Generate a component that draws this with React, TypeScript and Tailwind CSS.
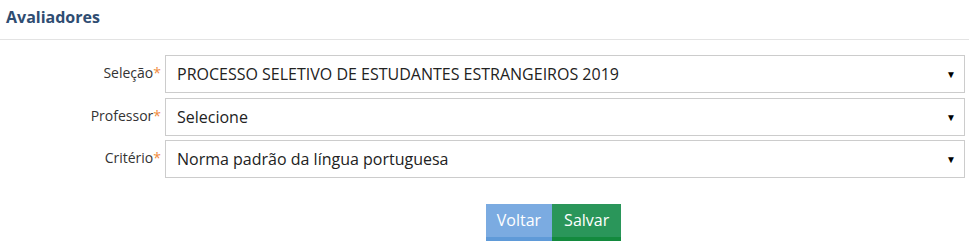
import React from "react";

const campos = [
    { label: "Seleção", value: "PROCESSO SELETIVO DE ESTUDANTES ESTRANGEIROS 2019" },
    { label: "Professor", value: "Selecione" },
    { label: "Critério", value: "Norma padrão da língua portuguesa" },
];

export default function App() {
    return (
        <div className="w-[971px] h-[247px] bg-white font-['Open_Sans',sans-serif] overflow-hidden">
            {/* cabeçalho */}
            <div className="pr-[2px]">
                <h2 className="pl-[6px] text-[16px] font-bold text-[#2f4d72] leading-[34px] h-[40px] border-b border-[#e3e3e3]">
                    Avaliadores
                </h2>
            </div>

            <div className="pt-[15px] flex flex-col gap-[4.5px]">
                {campos.map((c) => (
                    <Campo key={c.label} label={c.label} value={c.value} />
                ))}
            </div>

            <div className="flex justify-center pt-[26px] pl-[136px]">
                <button className="h-[37px] px-[11px] bg-[#7babe1] border-b-4 border-[#5f9ad8] text-white text-[16px] leading-[33px]">
                    Voltar
                </button>
                <button className="h-[37px] px-[12px] bg-[#2a965a] border-b-4 border-[#138a3e] text-white text-[16px] leading-[33px]">
                    Salvar
                </button>
            </div>
        </div>
    );
}

const Campo = ({ label, value }: { label: string; value: string }) => {
    return (
        <div className="flex items-center h-[38px]">
            <label className="w-[165px] pr-[4px] pb-[3px] text-right text-[14px] text-[#333]">
                {label}
                <span className="text-[#f08a3c]">*</span>
            </label>
            <div className="w-[800px] h-full border border-[#cccccc] flex items-center justify-between pl-[11px] pr-[8px]">
                <span className="text-[16px] text-[#222]">{value}</span>
                <span className="text-[10px] text-black leading-none">▼</span>
            </div>
        </div>
    );
};
